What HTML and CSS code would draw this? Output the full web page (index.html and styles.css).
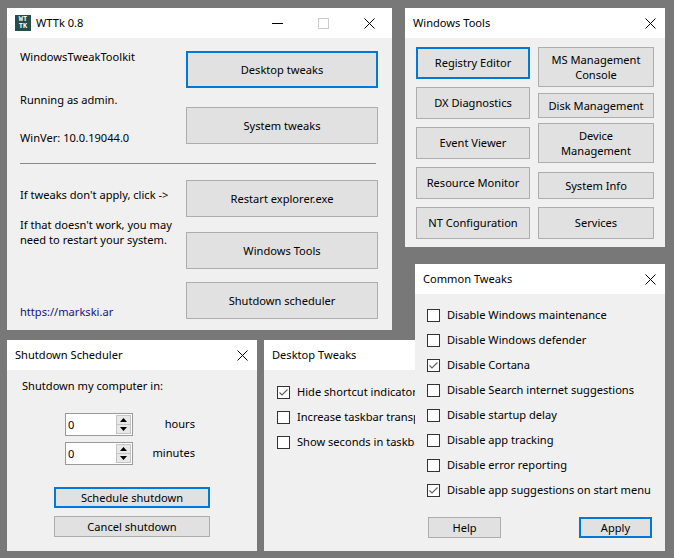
FILE: index.html
```html
<!DOCTYPE html>
<html lang="en">
<head>
<meta charset="utf-8">
<title>WTTk 0.8</title>
<link rel="stylesheet" href="styles.css">
</head>
<body>
<div class="desktop">

  <section class="win win-main">
    <header class="titlebar">
      <span class="app-icon"><span>WT</span><span>TK</span></span>
      <span class="title">WTTk 0.8</span>
      <span class="caps">
        <span class="cap"><svg width="11" height="11" viewBox="0 0 11 11"><path d="M0 5.5H11" stroke="#000" stroke-width="1"/></svg></span>
        <span class="cap"><svg width="11" height="11" viewBox="0 0 11 11"><rect x="0.5" y="0.5" width="10" height="10" fill="none" stroke="#cccccc" stroke-width="1"/></svg></span>
        <span class="cap"><svg width="11" height="11" viewBox="0 0 11 11"><path d="M0.5 0.5L10.5 10.5M10.5 0.5L0.5 10.5" stroke="#000" stroke-width="1"/></svg></span>
      </span>
    </header>
    <div class="body main-body">
      <div class="main-row main-top">
        <div class="info-col info-top">
          <p class="i1">WindowsTweakToolkit</p>
          <p class="i2">Running as admin.</p>
          <p class="i3">WinVer: 10.0.19044.0</p>
        </div>
        <div class="btn-col btn-col-top">
          <button class="btn main-btn focus">Desktop tweaks</button>
          <button class="btn main-btn gap19">System tweaks</button>
        </div>
      </div>
      <div class="sep"></div>
      <div class="main-row">
        <div class="info-col info-bottom">
          <p>If tweaks don't apply, click -&gt;</p>
          <p class="note">If that doesn't work, you may<br>need to restart your system.</p>
          <p class="link">https://markski.ar</p>
        </div>
        <div class="btn-col btn-col-bottom">
          <button class="btn main-btn">Restart explorer.exe</button>
          <button class="btn main-btn gap15">Windows Tools</button>
          <button class="btn main-btn gap13">Shutdown scheduler</button>
        </div>
      </div>
    </div>
  </section>

  <section class="win win-tools">
    <header class="titlebar">
      <span class="title">Windows Tools</span>
      <span class="caps">
        <span class="cap cap-sm"><svg width="11" height="11" viewBox="0 0 11 11"><path d="M0.5 0.5L10.5 10.5M10.5 0.5L0.5 10.5" stroke="#000" stroke-width="1"/></svg></span>
      </span>
    </header>
    <div class="body tools-body">
      <div class="tools-col tools-left">
        <button class="btn tool focus">Registry Editor</button>
        <button class="btn tool">DX Diagnostics</button>
        <button class="btn tool">Event Viewer</button>
        <button class="btn tool">Resource Monitor</button>
        <button class="btn tool">NT Configuration</button>
      </div>
      <div class="tools-col tools-right">
        <button class="btn tool two-line h40">MS Management<br>Console</button>
        <button class="btn tool h25 mt6">Disk Management</button>
        <button class="btn tool two-line h40 mt5">Device<br>Management</button>
        <button class="btn tool h27 mt9">System Info</button>
        <button class="btn tool h32 mt8">Services</button>
      </div>
    </div>
  </section>

  <section class="win win-shutdown">
    <header class="titlebar">
      <span class="title">Shutdown Scheduler</span>
      <span class="caps">
        <span class="cap cap-sm"><svg width="11" height="11" viewBox="0 0 11 11"><path d="M0.5 0.5L10.5 10.5M10.5 0.5L0.5 10.5" stroke="#000" stroke-width="1"/></svg></span>
      </span>
    </header>
    <div class="body shutdown-body">
      <p>Shutdown my computer in:</p>
      <div class="spin-grid">
        <div class="num">
          <span class="num-val">0</span>
          <span class="spin">
            <span class="spin-btn"><svg width="7" height="4" viewBox="0 0 7 4"><path d="M3.5 0L7 4H0Z" fill="#000"/></svg></span>
            <span class="spin-btn"><svg width="7" height="4" viewBox="0 0 7 4"><path d="M0 0H7L3.5 4Z" fill="#000"/></svg></span>
          </span>
        </div>
        <span class="unit">hours</span>
        <div class="num">
          <span class="num-val">0</span>
          <span class="spin">
            <span class="spin-btn"><svg width="7" height="4" viewBox="0 0 7 4"><path d="M3.5 0L7 4H0Z" fill="#000"/></svg></span>
            <span class="spin-btn"><svg width="7" height="4" viewBox="0 0 7 4"><path d="M0 0H7L3.5 4Z" fill="#000"/></svg></span>
          </span>
        </div>
        <span class="unit">minutes</span>
      </div>
      <button class="btn wide-btn focus sched">Schedule shutdown</button>
      <button class="btn wide-btn cancel">Cancel shutdown</button>
    </div>
  </section>

  <section class="win win-desktop">
    <header class="titlebar">
      <span class="title">Desktop Tweaks</span>
      <span class="caps">
        <span class="cap cap-sm"><svg width="11" height="11" viewBox="0 0 11 11"><path d="M0.5 0.5L10.5 10.5M10.5 0.5L0.5 10.5" stroke="#000" stroke-width="1"/></svg></span>
      </span>
    </header>
    <div class="body">
      <ul class="check-list desk-list">
        <li class="check-row"><span class="chk"><svg width="11" height="11" viewBox="0 0 11 11"><path d="M1.5 5.5L4 8L9.5 2.5" fill="none" stroke="#5f5f5f" stroke-width="1.1"/></svg></span>Hide shortcut indicator arrows</li>
        <li class="check-row"><span class="chk"></span>Increase taskbar transparency</li>
        <li class="check-row"><span class="chk"></span>Show seconds in taskbar clock</li>
      </ul>
    </div>
  </section>

  <section class="win win-common">
    <header class="titlebar">
      <span class="title">Common Tweaks</span>
      <span class="caps">
        <span class="cap cap-sm"><svg width="11" height="11" viewBox="0 0 11 11"><path d="M0.5 0.5L10.5 10.5M10.5 0.5L0.5 10.5" stroke="#000" stroke-width="1"/></svg></span>
      </span>
    </header>
    <div class="body common-body">
      <ul class="check-list common-list">
        <li class="check-row"><span class="chk"></span>Disable Windows maintenance</li>
        <li class="check-row"><span class="chk"></span>Disable Windows defender</li>
        <li class="check-row"><span class="chk"><svg width="11" height="11" viewBox="0 0 11 11"><path d="M1.5 5.5L4 8L9.5 2.5" fill="none" stroke="#5f5f5f" stroke-width="1.1"/></svg></span>Disable Cortana</li>
        <li class="check-row"><span class="chk"></span>Disable Search internet suggestions</li>
        <li class="check-row"><span class="chk"></span>Disable startup delay</li>
        <li class="check-row"><span class="chk"></span>Disable app tracking</li>
        <li class="check-row"><span class="chk"></span>Disable error reporting</li>
        <li class="check-row"><span class="chk"><svg width="11" height="11" viewBox="0 0 11 11"><path d="M1.5 5.5L4 8L9.5 2.5" fill="none" stroke="#5f5f5f" stroke-width="1.1"/></svg></span>Disable app suggestions on start menu</li>
      </ul>
      <div class="common-actions">
        <button class="btn small-btn">Help</button>
        <button class="btn small-btn focus">Apply</button>
      </div>
    </div>
  </section>

</div>
</body>
</html>
```

FILE: styles.css
```css
* {
  box-sizing: border-box;
  margin: 0;
  padding: 0;
}

html,
body {
  width: 674px;
  height: 558px;
  overflow: hidden;
}

body {
  background: #787878;
  font-family: "Noto Sans", "Liberation Sans", sans-serif;
  font-size: 11.1px;
  line-height: 16px;
  color: #000;
}

.desktop {
  position: relative;
  width: 674px;
  height: 558px;
}

/* ---------- windows ---------- */
.win {
  position: absolute;
  display: flex;
  flex-direction: column;
  background: #f0f0f0;
  overflow: hidden;
}

.win-main { left: 7px; top: 8px; width: 385px; height: 322px; }
.win-tools { left: 405px; top: 8px; width: 260px; height: 239px; }
.win-shutdown { left: 7px; top: 340px; width: 250px; height: 211px; }
.win-desktop { left: 264px; top: 340px; width: 250px; height: 211px; z-index: 1; }
.win-common { left: 415px; top: 264px; width: 250px; height: 287px; z-index: 2; }

.titlebar {
  flex: none;
  height: 30px;
  background: #fff;
  display: flex;
  align-items: center;
  padding-left: 8px;
}

.title {
  flex: 1;
  white-space: nowrap;
}

.caps {
  display: flex;
  align-self: stretch;
}

.cap {
  width: 46px;
  display: flex;
  align-items: center;
  justify-content: center;
}

.cap-sm { width: 30px; }

.app-icon {
  flex: none;
  width: 16px;
  height: 16px;
  margin-right: 5px;
  background: #234e4a;
  color: #fff;
  display: flex;
  flex-direction: column;
  align-items: center;
  justify-content: center;
  font-family: "DejaVu Sans Mono", monospace;
  font-size: 7px;
  font-weight: bold;
  line-height: 7px;
}

.body { flex: 1; }

/* ---------- buttons ---------- */
.btn {
  font: inherit;
  color: #000;
  background: #e1e1e1;
  border: 1px solid #adadad;
  display: flex;
  align-items: center;
  justify-content: center;
  text-align: center;
  white-space: nowrap;
}

.btn.focus { border: 2px solid #0078d7; }

/* ---------- main window ---------- */
.main-body {
  display: flex;
  flex-direction: column;
  padding-left: 13px;
}

.main-row { display: flex; }
.main-top { height: 108px; }

.info-col { width: 166px; white-space: nowrap; }

.btn-col {
  width: 192px;
  display: flex;
  flex-direction: column;
}

.info-top { padding-top: 11px; }
.info-top .i2 { margin-top: 27px; }
.info-top .i3 { margin-top: 22px; }

.btn-col-top { padding-top: 13px; }
.btn-col-bottom { padding-top: 16px; }

.main-btn { height: 37px; }
.gap19 { margin-top: 19px; }
.gap15 { margin-top: 15px; }
.gap13 { margin-top: 13px; }

.sep {
  width: 356px;
  height: 1px;
  margin-top: 17px;
  background: #8a8a8a;
}

.info-bottom { padding-top: 23px; }
.info-bottom .note { margin-top: 14px; line-height: 15px; }
.info-bottom .link { margin-top: 57px; color: #1b127e; }

/* ---------- windows tools ---------- */
.tools-body {
  display: flex;
  gap: 8px;
  padding: 9px 11px 0;
}

.tools-col {
  display: flex;
  flex-direction: column;
}

.tools-left { width: 114px; gap: 8px; }
.tools-left .tool { height: 32px; }
.tools-right { width: 116px; }

.two-line { line-height: 15px; }
.h40 { height: 40px; }
.h25 { height: 25px; }
.h27 { height: 27px; }
.h32 { height: 32px; }
.mt5 { margin-top: 5px; }
.mt6 { margin-top: 6px; }
.mt8 { margin-top: 8px; }
.mt9 { margin-top: 9px; }

/* ---------- shutdown scheduler ---------- */
.shutdown-body {
  display: flex;
  flex-direction: column;
  padding: 8px 0 0 15px;
}

.spin-grid {
  display: grid;
  grid-template-columns: 68px 62px;
  row-gap: 6px;
  margin: 19px 0 0 43px;
}

.num {
  height: 23px;
  border: 1px solid #9a9a9a;
  background: #fff;
  display: flex;
  align-items: center;
  justify-content: space-between;
  padding: 0 1px 0 2px;
}

.spin {
  width: 15px;
  height: 19px;
  display: flex;
  flex-direction: column;
  border: 1px solid #c4c4c4;
  background: #e8e8e8;
}

.spin-btn {
  flex: 1;
  display: flex;
  align-items: center;
  justify-content: center;
}

.spin-btn + .spin-btn { border-top: 1px solid #c4c4c4; }

.unit {
  text-align: right;
  align-self: center;
  margin-top: -2px;
}

.wide-btn {
  width: 156px;
  height: 21px;
  margin-left: 32px;
}

.sched { margin-top: 22px; }
.cancel { margin-top: 8px; }

/* ---------- check lists ---------- */
.check-list {
  list-style: none;
  display: flex;
  flex-direction: column;
  gap: 9px;
}

.check-row {
  height: 16px;
  display: flex;
  align-items: center;
  gap: 7px;
  white-space: nowrap;
}

.chk {
  flex: none;
  width: 13px;
  height: 13px;
  border: 1px solid #333;
  background: #fff;
  display: flex;
}

.desk-list { padding: 14px 0 0 13px; }

.common-body {
  display: flex;
  flex-direction: column;
}

.common-list { padding: 13px 0 0 12px; }

.common-actions {
  display: flex;
  justify-content: space-between;
  padding: 0 13px;
  margin-top: 19px;
}

.small-btn {
  width: 73px;
  height: 21px;
}
```
